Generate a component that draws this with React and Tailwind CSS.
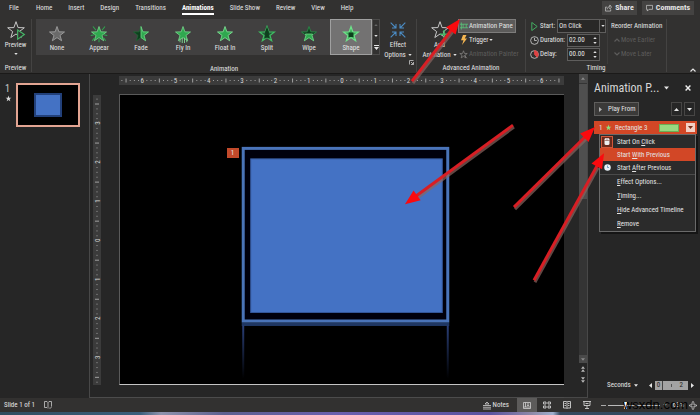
import { useState } from "react"

const STAR = "M12 2 L14.5 9.1 L22 9.3 L16 13.9 L18.2 21 L12 16.8 L5.8 21 L8 13.9 L2 9.3 L9.5 9.1 Z"

const tabs = ["Home", "Insert", "Design", "Transitions", "Animations", "Slide Show", "Review", "View", "Help"]

const effects = ["None", "Appear", "Fade", "Fly In", "Float In", "Split", "Wipe", "Shape"]

const menuItems = [
  { before: "Start On ", key: "C", after: "lick", icon: "mouse" },
  { before: "Start ", key: "W", after: "ith Previous", active: true },
  { before: "Start ", key: "A", after: "fter Previous", icon: "clock" },
  { before: "", key: "E", after: "ffect Options...", divider: true },
  { before: "", key: "T", after: "iming..." },
  { before: "", key: "H", after: "ide Advanced Timeline" },
  { before: "", key: "R", after: "emove" },
]

function Caret({ className = "w-[5px] h-[3px]", up = false }) {
  return (
    <svg viewBox="0 0 10 6" className={className} fill="currentColor" aria-hidden="true">
      <path d={up ? "M0 6 L5 0 L10 6 Z" : "M0 0 L5 6 L10 0 Z"} />
    </svg>
  )
}

function Chevron({ up = false, className = "w-[6px] h-[4px]" }) {
  return (
    <svg viewBox="0 0 12 8" className={className} fill="none" stroke="currentColor" strokeWidth="2.4" aria-hidden="true">
      <path d={up ? "M1 7 L6 2 L11 7" : "M1 1 L6 6 L11 1"} />
    </svg>
  )
}

function EffectIcon({ name }) {
  const green = "#2fa84f"
  const light = "#7ddb92"
  const dark = "#0d3f1d"
  return (
    <svg viewBox="0 0 24 24" className="w-[18px] h-[18px]" aria-hidden="true">
      {name === "None" && <path d={STAR} fill="#6a6a6a" stroke="#9a9a9a" strokeWidth="1.3" />}
      {name === "Appear" && (
        <>
          <path d={STAR} fill={green} stroke={light} strokeWidth="1" />
          <path d="M4 2 L8 7 M20 2 L16 7 M1 14 L6 13 M23 14 L18 13 M12 18 V23 M3 21 L6 17 M21 21 L18 17" stroke={green} strokeWidth="1.4" />
        </>
      )}
      {name === "Fade" && (
        <>
          <path d={STAR} fill={dark} stroke="#1d6b34" strokeWidth="1" />
          <path d="M12 2 L14.5 9.1 L22 9.3 L16 13.9 L18.2 21 L12 16.8 Z" fill={green} stroke={light} strokeWidth="1" />
        </>
      )}
      {name === "Fly In" && (
        <>
          <path d={STAR} fill={green} stroke={light} strokeWidth="1" />
          <path d="M8 18 V23 M11 17 V24 M14 17 V24 M17 18 V23" stroke={light} strokeWidth="1.2" />
        </>
      )}
      {name === "Float In" && <path d={STAR} fill={green} stroke={light} strokeWidth="1.2" />}
      {name === "Split" && (
        <>
          <path d={STAR} fill="#27553a" stroke="#3fbf63" strokeWidth="1.6" />
          <path d="M9.5 9 L12 2 L14.5 9 V18 L12 16.8 L9.5 18 Z" fill={dark} />
        </>
      )}
      {name === "Wipe" && (
        <>
          <path d={STAR} fill={dark} stroke="#2b8a48" strokeWidth="1.2" />
          <path d="M7.2 12 H16.8 L16 13.9 L18.2 21 L12 16.8 L5.8 21 L8 13.9 Z" fill={green} stroke={light} strokeWidth="1" />
        </>
      )}
      {name === "Shape" && (
        <>
          <path d={STAR} fill="#3fae5c" stroke="#6fe08a" strokeWidth="1.6" />
          <rect x="8.8" y="10" width="6.4" height="6" fill={dark} />
        </>
      )}
    </svg>
  )
}

function Group({ label, className = "", children }) {
  return (
    <section className={`flex flex-col justify-between border-r border-[#444342] ${className}`}>
      <div className="flex flex-1">{children}</div>
      <h2 className="h-2 text-center leading-2">{label}</h2>
    </section>
  )
}

function TimeField({ id, label, value, delay = false }) {
  return (
    <div className="flex h-[14px] items-center">
      <svg viewBox="0 0 20 20" className="h-[9px] w-[9px] shrink-0" fill="none" stroke="#d0d0d0" strokeWidth="1.8" aria-hidden="true">
        <circle cx="10" cy="10" r="8.6" />
        {delay ? <path d="M10 1 A9 9 0 0 1 16 16 L10 10 Z" fill="#e04343" stroke="#e04343" /> : <path d="M10 4 V10 H15" />}
      </svg>
      <label htmlFor={id} className="w-[28px] pl-px">{label}</label>
      <div className="flex h-[13px] w-[33px] items-center border border-[#5f5e5d] bg-[#292827] pr-[2px]">
        <input id={id} defaultValue={value} className="w-full min-w-0 pl-px outline-none" />
        <span className="flex flex-col gap-[3px]">
          <Caret up className="h-[2px] w-[4px]" />
          <Caret className="h-[2px] w-[4px]" />
        </span>
      </div>
    </div>
  )
}

function Ribbon() {
  const [effect, setEffect] = useState("Shape")
  return (
    <div className="flex h-[59px] border-b border-[#1b1a19] bg-[#323130] pt-1 pb-px whitespace-nowrap">
      <Group label="Preview" className="w-8">
        <button className="flex w-full flex-col items-center leading-[10px]">
          <svg viewBox="0 0 24 24" className="mt-px h-[20px] w-[20px]" fill="none" aria-hidden="true">
            <path d={STAR} stroke="#c8c8c8" strokeWidth="1.2" />
            <path d="M14 12 L22 17.500 L14 23 Z" fill="#323130" stroke="#45b868" strokeWidth="1.4" />
          </svg>
          Preview
          <Caret className="mt-[3px] h-[2px] w-[4px]" />
        </button>
      </Group>

      <Group label="Animation" className="w-[385px]">
        <div className="ml-1 flex h-9 bg-[#414040]">
          {effects.map((name) => (
            <button
              key={name}
              onClick={() => setEffect(name)}
              className={`flex w-[42px] flex-col items-center border pt-[5px] leading-[10px] ${
                effect === name ? "border-[#a0a0a0] bg-[#737272]" : "border-transparent"
              }`}
            >
              <EffectIcon name={name} />
              {name}
            </button>
          ))}
          <div className="flex w-2 flex-col items-center justify-between border border-[#4c4b4a] bg-[#323130] py-1">
            <Caret up className="h-[2px] w-[4px] text-[#666]" />
            <Caret className="h-[2px] w-[4px]" />
            <svg viewBox="0 0 10 10" className="h-[5px] w-[5px]" fill="currentColor" aria-hidden="true">
              <path d="M0 0 H10 V2 H0 Z M0 4 H10 L5 10 Z" />
            </svg>
          </div>
        </div>
        <button className="flex flex-1 flex-col items-center leading-[10px]">
          <svg viewBox="0 0 24 24" className="mt-[2px] mb-px h-[18px] w-[16px]" fill="none" stroke="#4b8cc4" strokeWidth="1.6" aria-hidden="true">
            <path d="M1 1 L9 9 M3 9 H9 V3 M23 1 L15 9 M21 9 H15 V3 M1 23 L9 15 M3 15 H9 V21 M23 23 L15 15 M21 15 H15 V21" />
          </svg>
          Effect
          <span className="flex items-center gap-[2px]">Options <Caret className="h-[2px] w-[4px]" /></span>
          <svg viewBox="0 0 10 10" className="mt-auto mr-[2px] h-[5px] w-[5px] self-end" fill="none" stroke="#b8b8b8" strokeWidth="1.8" aria-hidden="true">
            <path d="M1 9 V1 H9 M4 4 L9 9 M9 4 V9 H4" />
          </svg>
        </button>
      </Group>

      <Group label="Advanced Animation" className="w-[109px]">
        <button className="flex w-[41px] shrink-0 flex-col items-center pl-1 leading-[10px]">
          <svg viewBox="0 0 24 24" className="mt-px h-[20px] w-[20px]" fill="none" aria-hidden="true">
            <path d={STAR} stroke="#c8c8c8" strokeWidth="1.2" />
            <path d="M17 12 V22 M12 17 H22" stroke="#45b868" strokeWidth="1.8" />
          </svg>
          Add
          <span className="flex items-center gap-[2px]">Animation <Caret className="h-[2px] w-[4px]" /></span>
        </button>
        <div className="flex flex-col items-start">
          <button className="flex h-[14px] w-[58px] items-center gap-px border border-[#7d7c7b] bg-[#5c5b5a] px-px">
            <svg viewBox="0 0 18 16" className="h-[8px] w-[8px] shrink-0" fill="none" stroke="#59c57a" strokeWidth="1.8" aria-hidden="true">
              <path d="M3 0 V16 M0 4 H18 M0 12 H18 M7 4 V12 M14 4 V12" />
            </svg>
            Animation Pane
          </button>
          <button className="flex h-[14px] items-center gap-px px-[2px]">
            <svg viewBox="0 0 14 20" className="h-[10px] w-[8px]" fill="#f5b651" aria-hidden="true">
              <path d="M5 0 H12 L8.500 7 H13 L3 20 L6 10.500 H1 Z" />
            </svg>
            Trigger <Caret className="h-[2px] w-[4px]" />
          </button>
          <button disabled className="flex h-[14px] items-center gap-px px-px text-[#5d5c5b]">
            <svg viewBox="0 0 24 24" className="h-[9px] w-[9px] shrink-0" fill="none" stroke="#858483" strokeWidth="2" aria-hidden="true">
              <path d={STAR} />
              <path d="M14 14 L21 22" />
            </svg>
            Animation Painter
          </button>
        </div>
      </Group>

      <Group label="Timing" className="w-[141px]">
        <div className="flex w-[82px] shrink-0 flex-col border-r border-[#3d3c3b] pl-1">
          <div className="flex h-[14px] items-center">
            <svg viewBox="0 0 16 20" className="h-[9px] w-[9px] shrink-0" fill="none" stroke="#45b868" strokeWidth="2" aria-hidden="true">
              <path d="M2 1 L14 10 L2 19 Z" />
            </svg>
            <label htmlFor="start" className="w-[18px] pl-px">Start:</label>
            <div className="relative h-[14px] w-[49px] shrink-0">
              <select id="start" className="h-full w-full appearance-none border border-[#5f5e5d] bg-[#292827] pl-px outline-none">
                <option>On Click</option>
                <option>With Previous</option>
                <option>After Previous</option>
              </select>
              <span className="pointer-events-none absolute inset-y-0 right-0 flex w-[7px] items-center justify-center border-x border-[#5f5e5d]">
                <Caret className="h-[2px] w-[4px]" />
              </span>
            </div>
          </div>
          <TimeField id="duration" label="Duration:" value="02.00" />
          <TimeField id="delay" label="Delay:" value="00.00" delay />
        </div>
        <div className="flex flex-col pl-[3px]">
          <span className="h-[14px] leading-[14px]">Reorder Animation</span>
          <button disabled className="flex h-[14px] items-center gap-px pl-[3px] text-[#5d5c5b]"><Chevron up />Move Earlier</button>
          <button disabled className="flex h-[14px] items-center gap-px pl-[3px] text-[#5d5c5b]"><Chevron />Move Later</button>
        </div>
      </Group>
      <button aria-label="Collapse the ribbon" className="mt-auto mr-1 ml-auto"><Chevron up /></button>
    </div>
  )
}

function Ruler({ vertical = false }) {
  const length = vertical ? 290 : 445
  const unit = vertical ? 39 : 33.3
  const mid = vertical ? 145 : 223
  const reach = vertical ? 3 : 6
  const ticks = []
  for (let i = -reach * 8 - 6; i <= reach * 8 + 6; i++) {
    const at = mid + (i * unit) / 8
    if (i % 8 === 0 || at < 2 || at > length - 2) continue
    const h = i % 4 === 0 ? 4 : 1
    ticks.push(
      vertical ? (
        <rect key={i} x={4 - h / 2} y={at} width={h} height="1" />
      ) : (
        <rect key={i} x={at} y={4.5 - h / 2} width="1" height={h} />
      )
    )
  }
  const numbers = Array.from({ length: reach * 2 + 1 }, (_, i) => i - reach)
  return (
    <svg
      viewBox={vertical ? "0 0 8 290" : "0 0 445 9"}
      preserveAspectRatio="none"
      className={vertical ? "h-full w-2 bg-[#3b3b3b]" : "h-[9px] w-full bg-[#3b3b3b]"}
      fill="#a0a0a0"
      aria-hidden="true"
    >
      {ticks}
      {numbers.map((n) => (
        <text
          key={n}
          fontSize="7"
          textAnchor="middle"
          fill="#d6d6d6"
          transform={vertical ? `translate(6.5 ${mid + n * unit}) rotate(-90)` : `translate(${mid + n * unit} 7)`}
        >
          {Math.abs(n)}
        </text>
      ))}
    </svg>
  )
}

function Slide() {
  return (
    <div className="relative h-full border-t border-b border-l border-t-[#5a5a5a] border-b-[#c4c4c4] border-l-[#5a5a5a] bg-black">
      <svg viewBox="0 0 445 290" preserveAspectRatio="none" className="h-full w-full" role="img" aria-label="Rectangle 3">
        <defs>
          <linearGradient id="glow" x1="0" y1="0" x2="0" y2="1">
            <stop offset="0" stopColor="#2a3f78" />
            <stop offset="1" stopColor="#000" />
          </linearGradient>
        </defs>
        <rect x="122" y="228" width="208" height="3.500" fill="#1f3763" />
        <rect x="122.500" y="231" width="2" height="53" fill="url(#glow)" />
        <rect x="327.500" y="231" width="2" height="53" fill="url(#glow)" />
        <rect x="123.500" y="53.500" width="205" height="173" fill="#00000c" stroke="#4a74b9" strokeWidth="3" />
        <rect x="131" y="64" width="192" height="154" fill="#4472c4" stroke="#34579a" strokeWidth="1" />
      </svg>
      <button className="absolute top-[18.300%] left-[24%] h-[10px] w-[12px] bg-[#c24a2b] text-center leading-[10px]">1</button>
    </div>
  )
}

function Editor() {
  return (
    <main className="flex min-w-0 flex-1">
      <aside className="flex w-[90px] items-start border-r border-[#484848] pt-[9px] pl-[5px]">
        <div className="flex w-[11px] flex-col items-start">
          <span className="text-[10px] leading-[12px] text-[#c8c8c8]">1</span>
          <svg viewBox="0 0 24 24" className="h-[7px] w-[7px]" fill="#d8d8d8" aria-hidden="true"><path d={STAR} /></svg>
        </div>
        <button aria-label="Slide 1" className="flex h-[44px] w-[64px] justify-center border-2 border-[#e2a492] bg-black pt-[8px]">
          <span className="h-[24px] w-[28px] border-2 border-[#22407a] bg-[#4472c4]"></span>
        </button>
      </aside>

      <div className="flex min-w-0 flex-1 flex-col">
        <div className="flex flex-1 border-b border-[#4c4c4c] pb-3">
          <div className="flex w-[29px] pt-[21px] pl-[3px]"><Ruler vertical /></div>
          <div className="flex min-w-0 flex-1 flex-col pt-[2px]">
            <Ruler />
            <div className="min-h-0 flex-1 pt-[9px]"><Slide /></div>
          </div>
        </div>
      </div>

      <div className="flex w-6 flex-col items-end border-r border-b border-[#484848] text-[#8a8a8a]">
        <div className="flex w-[8px] flex-1 flex-col items-center bg-[#343434]">
          <span className="flex h-[9px] w-full items-center justify-center bg-[#4a4a4a]"><Caret up className="h-[3px] w-[4px]" /></span>
          <span className="mt-px h-[115px] w-full bg-[#4f4f4f]"></span>
          <span className="mt-auto flex h-[8px] w-full items-center justify-center bg-[#4a4a4a]"><Caret className="h-[3px] w-[4px]" /></span>
        </div>
        <div className="flex h-[34px] w-[8px] flex-col items-center gap-[5px] pt-[3px] text-[#b8b8b8]">
          <button aria-label="Previous slide"><Caret up className="h-[3px] w-[4px]" /><Caret up className="h-[3px] w-[4px]" /></button>
          <button aria-label="Next slide"><Caret className="h-[3px] w-[4px]" /><Caret className="h-[3px] w-[4px]" /></button>
        </div>
      </div>
    </main>
  )
}

function MenuIcon({ name }) {
  if (name === "mouse") {
    return (
      <span className="flex h-[12px] w-[12px] items-center justify-center border border-[#d2573a] bg-[#6b2a1c]">
        <svg viewBox="0 0 12 14" className="h-[7px] w-[6px]" aria-hidden="true">
          <rect x="1" y="0" width="10" height="14" rx="3" fill="#eee" />
          <path d="M1 5 H11 M6 0 V5" stroke="#6b2a1c" />
        </svg>
      </span>
    )
  }
  if (name === "clock") {
    return (
      <svg viewBox="0 0 14 14" className="h-[7px] w-[7px]" aria-hidden="true">
        <circle cx="7" cy="7" r="6.500" fill="#e8f2f8" />
        <path d="M7 3 V7 H10" fill="none" stroke="#4a86b0" strokeWidth="1.5" />
      </svg>
    )
  }
  return null
}

function AnimationPane() {
  return (
    <aside className="flex w-28 flex-col pt-1 pr-[3px] pl-[6px] whitespace-nowrap">
      <header className="flex h-5 items-center">
        <h2 className="w-[70px] text-[12px] leading-5 text-[#d8d8d8]">Animation P...</h2>
        <button aria-label="Pane options" className="mr-auto"><Caret className="h-[4px] w-[5px]" /></button>
        <button aria-label="Close pane" className="mr-[6px]">
          <svg viewBox="0 0 10 10" className="h-[6px] w-[6px]" stroke="#eee" strokeWidth="2.4" aria-hidden="true">
            <path d="M1 1 L9 9 M9 1 L1 9" />
          </svg>
        </button>
      </header>
      <div className="mt-1 flex h-[14px] gap-[2px] pr-[2px]">
        <button className="mr-auto flex w-[45px] items-center gap-[6px] border border-[#5f5e5d] bg-[#3b3a39] pl-[4px]">
          <svg viewBox="0 0 6 10" className="h-[5px] w-[3px]" fill="#b0b0b0" aria-hidden="true"><path d="M0 0 L6 5 L0 10 Z" /></svg>
          Play From
        </button>
        <button aria-label="Move up" className="flex w-[11px] items-center justify-center border border-[#474645]"><Caret up className="h-[3px] w-[5px]" /></button>
        <button aria-label="Move down" className="flex w-[11px] items-center justify-center border border-[#474645]"><Caret className="h-[3px] w-[5px]" /></button>
      </div>

      <div className="relative mt-[5px]">
        <div className="flex h-[13px] items-center bg-[#d24726] pl-[5px]">
          <span className="w-[6px]">1</span>
          <svg viewBox="0 0 24 24" className="h-[7px] w-[7px]" fill="#8fe07f" aria-hidden="true"><path d={STAR} /></svg>
          <span className="pl-[3px]">Rectangle 3</span>
          <span className="mr-[7px] ml-auto h-[8px] w-[20px] border border-[#6cae55] bg-[#99d880]"></span>
          <button aria-label="Effect menu" className="mr-[2px] flex h-[9px] w-[9px] items-center justify-center bg-[#f2cfc4] text-[#7a2a15]"><Caret className="h-[3px] w-[5px]" /></button>
        </div>
        <div role="menu" className="absolute top-full left-[5px] w-[97px] border border-[#6a6a6a] bg-[#2b2b2b] shadow-[2px_2px_0_#151515]">
          {menuItems.map((item) => (
            <button
              key={item.key}
              role="menuitem"
              className={`flex w-full items-center ${item.divider ? "h-[15px] border-t border-[#4a4a4a]" : item.icon || item.active ? "h-[13px]" : "h-[14px]"} ${
                item.active ? "bg-[#d24726]" : ""
              }`}
            >
              <span className="flex w-[17px] items-center justify-center pr-[3px]"><MenuIcon name={item.icon} /></span>
              <span>{item.before}<u>{item.key}</u>{item.after}</span>
            </button>
          ))}
        </div>
      </div>

      <footer className="mt-auto mb-2 flex h-[10px] items-center pl-[13px]">
        <button className="mr-auto flex items-center gap-[3px]">Seconds <Caret className="h-[3px] w-[4px]" /></button>
        <button aria-label="Scroll left" className="mr-[3px]"><svg viewBox="0 0 6 10" className="h-[5px] w-[3px]" fill="currentColor"><path d="M6 0 L0 5 L6 10 Z" /></svg></button>
        <span className="flex h-[9px] w-[33px] items-center justify-between bg-[#a3a3a3] pr-[5px] text-[#222]">
          <span className="w-[8px] border-r border-[#444] text-center leading-[9px]">0</span>
          <span className="h-[3px] w-px bg-[#555]"></span>
          <span className="leading-[9px]">2</span>
        </span>
        <button aria-label="Scroll right" className="mr-[3px] ml-[3px]"><svg viewBox="0 0 6 10" className="h-[5px] w-[3px]" fill="currentColor"><path d="M0 0 L6 5 L0 10 Z" /></svg></button>
      </footer>
    </aside>
  )
}

function StatusBar() {
  return (
    <footer className="relative flex h-[14px] items-center bg-[#323130] pl-1">
      <span>Slide 1 of 1</span>
      <svg viewBox="0 0 16 16" className="ml-[9px] h-[8px] w-[8px]" fill="none" stroke="#c8c8c8" strokeWidth="1.6" aria-hidden="true">
        <path d="M8 3 V13 M1 1 H6 L8 3 L10 1 H15 V11 M1 1 V13 H6 L8 15 M10 13 L12 15 L16 11" />
      </svg>
      <button className="mr-[8px] ml-auto flex items-center gap-[2px]">
        <svg viewBox="0 0 16 16" className="h-[9px] w-[8px]" fill="none" stroke="#d0d0d0" strokeWidth="1.6" aria-hidden="true">
          <path d="M0 8 H16 M0 11.500 H16 M0 15 H16 M4 5 L8 1 L12 5 Z" />
        </svg>
        Notes
      </button>
      <button aria-label="Normal view" className="flex h-full w-5 items-center justify-center bg-[#5c5b5a]">
        <svg viewBox="0 0 16 14" className="h-[7px] w-[8px]" fill="none" stroke="#d0d0d0" strokeWidth="1.6" aria-hidden="true">
          <path d="M1 1 H15 V13 H1 Z M1 10 H15 M5 1 V10 M8 4 H12 M8 7 H12" />
        </svg>
      </button>
      <button aria-label="Slide sorter" className="flex w-5 justify-center">
        <svg viewBox="0 0 16 16" className="h-[8px] w-[8px]" fill="none" stroke="#d0d0d0" strokeWidth="1.8" aria-hidden="true">
          <path d="M1 2 H6 V6 H1 Z M10 2 H15 V6 H10 Z M1 10 H6 V14 H1 Z M10 10 H15 V14 H10 Z" />
        </svg>
      </button>
      <button aria-label="Reading view" className="flex w-5 justify-center">
        <svg viewBox="0 0 16 16" className="h-[8px] w-[8px]" fill="none" stroke="#d0d0d0" strokeWidth="1.8" aria-hidden="true">
          <path d="M1 1 H7 L8 2 L9 1 H15 V14 H9 L8 15 L7 14 H1 Z M8 2 V15 M3 5 H6 M3 9 H6 M10 5 H13 M10 9 H13" />
        </svg>
      </button>
      <button aria-label="Slide show" className="flex w-5 justify-center">
        <svg viewBox="0 0 16 16" className="h-[8px] w-[8px]" fill="none" stroke="#d0d0d0" strokeWidth="1.8" aria-hidden="true">
          <path d="M0 1 H16 M2 1 V9 H14 V1 M8 9 V15 M4 15 H12 M5 5 H11" />
        </svg>
      </button>
      <button aria-label="Zoom out" className="ml-1 h-px w-[5px] bg-[#aaa]"></button>
      <input
        type="range"
        aria-label="Zoom"
        defaultValue="33"
        className="mx-[2px] h-[8px] w-[52px] appearance-none bg-[linear-gradient(#bbb,#bbb)] bg-size-[100%_1px] bg-center bg-no-repeat [&::-webkit-slider-thumb]:h-[7px] [&::-webkit-slider-thumb]:w-[3px] [&::-webkit-slider-thumb]:appearance-none [&::-webkit-slider-thumb]:bg-white"
      />
      <button aria-label="Zoom in" className="w-[6px] leading-[8px]">+</button>
      <span className="w-[21px] text-center">63%</span>
      <button aria-label="Fit slide to window" className="mr-[3px]">
        <svg viewBox="0 0 16 16" className="h-[9px] w-[8px]" fill="none" stroke="#d0d0d0" strokeWidth="1.6" aria-hidden="true">
          <path d="M4 5 H12 V11 H4 Z M8 0 V3 M6 2 L8 0 L10 2 M8 16 V13 M6 14 L8 16 L10 14 M0 8 H2 M2 6 L0 8 L2 10 M16 8 H14 M14 6 L16 8 L14 10" />
        </svg>
      </button>
      <span className="pointer-events-none absolute right-3 bottom-0 font-['Liberation_Sans',sans-serif] text-[13px] leading-[14px] text-black">wsxdn.com</span>
    </footer>
  )
}

// tail -> tip, with the head drawn along the same line
const arrows = [
  { x1: 412, y1: 81, x2: 460, y2: 19 },
  { x1: 513, y1: 125, x2: 405, y2: 204 },
  { x1: 514, y1: 207, x2: 595, y2: 127 },
  { x1: 534, y1: 280, x2: 604, y2: 153 },
]

function Arrows() {
  return (
    <svg viewBox="0 0 700 415" preserveAspectRatio="none" className="pointer-events-none absolute inset-0 h-full w-full" aria-hidden="true">
      {arrows.map(({ x1, y1, x2, y2 }) => {
        const length = Math.hypot(x2 - x1, y2 - y1)
        const angle = (Math.atan2(y2 - y1, x2 - x1) * 180) / Math.PI
        return (
          <g key={x1}>
            <line x1={x1 + 1} y1={y1 + 2} x2={x2 + (x1 - x2) * 0.1 + 1} y2={y2 + (y1 - y2) * 0.1 + 2} stroke="#8c6560" strokeOpacity="0.7" strokeWidth="3" />
            <g transform={`translate(${x1} ${y1}) rotate(${angle})`}>
              <path d={`M0 -1.500 H${length - 12} V1.500 H0 Z`} fill="#d81e24" />
              <path d={`M${length} 0 L${length - 15} -6 V6 Z`} fill="#fa0a0e" />
            </g>
          </g>
        )
      })}
    </svg>
  )
}

export default function App() {
  return (
    <div className="relative flex min-h-screen flex-col overflow-hidden bg-[#262626] font-['Liberation_Sans_Narrow','Roboto_Condensed','Roboto',sans-serif] text-[7px] leading-[10px] text-[#e4e4e4]">
      <nav className="flex h-[15px] items-center bg-[#323130] pl-[9px]">
        <button className="mr-[17px]">File</button>
        <div className="flex h-full gap-[16px]">
          {tabs.map((tab) => (
            <button
              key={tab}
              className={tab === "Animations" ? "border-b-2 border-white pt-[2px] font-bold text-white" : "whitespace-nowrap"}
            >
              {tab}
            </button>
          ))}
        </div>
        <div className="ml-auto flex gap-[5px] pr-[6px] text-[8px] font-bold">
          <button className="flex h-[14px] w-[35px] items-center justify-center gap-[3px] bg-[#444342]">
            <svg viewBox="0 0 16 16" className="h-[8px] w-[7px]" fill="none" stroke="#d0d0d0" strokeWidth="1.6" aria-hidden="true">
              <path d="M5 6 H1 V15 H13 V11 M5 11 C5 7 8 5 11 5 V1 L15 6 L11 10 V7" />
            </svg>
            Share
          </button>
          <button className="flex h-[14px] w-[52px] items-center justify-center gap-[3px] bg-[#444342]">
            <svg viewBox="0 0 16 16" className="h-[8px] w-[7px]" fill="none" stroke="#d0d0d0" strokeWidth="1.6" aria-hidden="true">
              <path d="M1 2 H15 V11 H7 L3 15 V11 H1 Z" />
            </svg>
            Comments
          </button>
        </div>
      </nav>
      <Ribbon />
      <div className="flex flex-1">
        <Editor />
        <AnimationPane />
      </div>
      <StatusBar />
      <div className="h-[3px] bg-[linear-gradient(90deg,#2f4d5f_0%,#3a5f7c_20%,#8f93ad_23%,#5d6090_32%,#6a5fae_48%,#5b53a0_70%,#8e8aa8_76%,#9fb0cf_79%,#34495e_80%,#2f4a63_100%)]"></div>
      <Arrows />
    </div>
  )
}
